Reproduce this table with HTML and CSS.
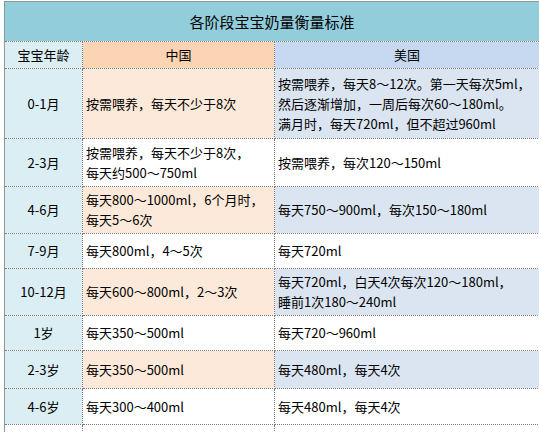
FILE: index.html
```html
<!DOCTYPE html>
<html lang="zh-CN">
<head>
<meta charset="utf-8">
<title>各阶段宝宝奶量衡量标准</title>
<link rel="stylesheet" href="styles.css">
</head>
<body>
<table class="milk">
  <colgroup>
    <col class="c-age">
    <col class="c-cn">
    <col class="c-us">
  </colgroup>
  <tr class="r-title"><th colspan="3" class="title">各阶段宝宝奶量衡量标准</th></tr>
  <tr class="r-head">
    <th class="age">宝宝年龄</th>
    <th class="cn-head">中国</th>
    <th class="us-head">美国</th>
  </tr>
  <tr class="r70 tint">
    <td class="age">0-1月</td>
    <td class="cn">按需喂养，每天不少于8次</td>
    <td class="us">按需喂养，每天8～12次。第一天每次5ml，<br>然后逐渐增加，一周后每次60～180ml。<br>满月时，每天720ml，但不超过960ml</td>
  </tr>
  <tr class="r48">
    <td class="age">2-3月</td>
    <td class="cn">按需喂养，每天不少于8次，<br>每天约500～750ml</td>
    <td class="us">按需喂养，每次120～150ml</td>
  </tr>
  <tr class="r47 tint">
    <td class="age">4-6月</td>
    <td class="cn">每天800～1000ml，6个月时，<br>每天5～6次</td>
    <td class="us">每天750～900ml，每次150～180ml</td>
  </tr>
  <tr class="r35">
    <td class="age">7-9月</td>
    <td class="cn">每天800ml，4～5次</td>
    <td class="us">每天720ml</td>
  </tr>
  <tr class="r47 tint">
    <td class="age">10-12月</td>
    <td class="cn">每天600～800ml，2～3次</td>
    <td class="us">每天720ml，白天4次每次120～180ml，<br>睡前1次180～240ml</td>
  </tr>
  <tr class="r35">
    <td class="age">1岁</td>
    <td class="cn">每天350～500ml</td>
    <td class="us">每天720～960ml</td>
  </tr>
  <tr class="r38 tint">
    <td class="age">2-3岁</td>
    <td class="cn">每天350～500ml</td>
    <td class="us">每天480ml，每天4次</td>
  </tr>
  <tr class="r36">
    <td class="age">4-6岁</td>
    <td class="cn">每天300～400ml</td>
    <td class="us">每天480ml，每天4次</td>
  </tr>
  <tr class="r-rest">
    <td class="blank"></td>
    <td class="blank"></td>
    <td class="blank"></td>
  </tr>
</table>
</body>
</html>
```
FILE: styles.css
```css
html, body {
  margin: 0;
  padding: 0;
  background: #ffffff;
}
body {
  font-family: "Noto Sans CJK SC", "Microsoft YaHei", sans-serif;
  font-size: 13px;
  color: #000000;
  overflow: hidden;
}
.milk {
  margin: 1px 0 0 4px;
  border-collapse: collapse;
  table-layout: fixed;
  width: 535px;
}
.c-age { width: 78px; }
.c-cn { width: 192px; }
.c-us { width: 265px; }

.milk th, .milk td {
  border: 1px dotted #7d7d7d;
  padding: 0 3px;
  line-height: 20px;
  vertical-align: middle;
  font-weight: normal;
  white-space: nowrap;
  overflow: hidden;
}
.milk th.title {
  background: #92cddc;
  font-size: 15px;
  text-align: center;
  border: 1px solid #8d9a9d;
  border-bottom: 1px dotted #7d7d7d;
}
.milk .age {
  background: #daeef3;
  text-align: center;
  border-left: 1px solid #8d9a9d;
}
.cn-head {
  background: #fbd4b4;
  text-align: center;
}
.us-head {
  background: #c6d9f1;
  text-align: center;
}
.cn, .us {
  text-align: left;
  background: #ffffff;
}
.tint .cn { background: #fde9d9; }
.tint .us { background: #dbe5f1; }
.milk td.blank {
  background: #ffffff;
  border-left: 1px dotted #7d7d7d;
}
.milk td.blank:first-child {
  border-left: 1px solid #8d9a9d;
}

.r-title { height: 40px; }
.r-head { height: 27px; }
.r70 { height: 70px; }
.r48 { height: 48px; }
.r47 { height: 47px; }
.r38 { height: 38px; }
.r36 { height: 36px; }
.r35 { height: 35px; }
.r-rest { height: 20px; }
```
